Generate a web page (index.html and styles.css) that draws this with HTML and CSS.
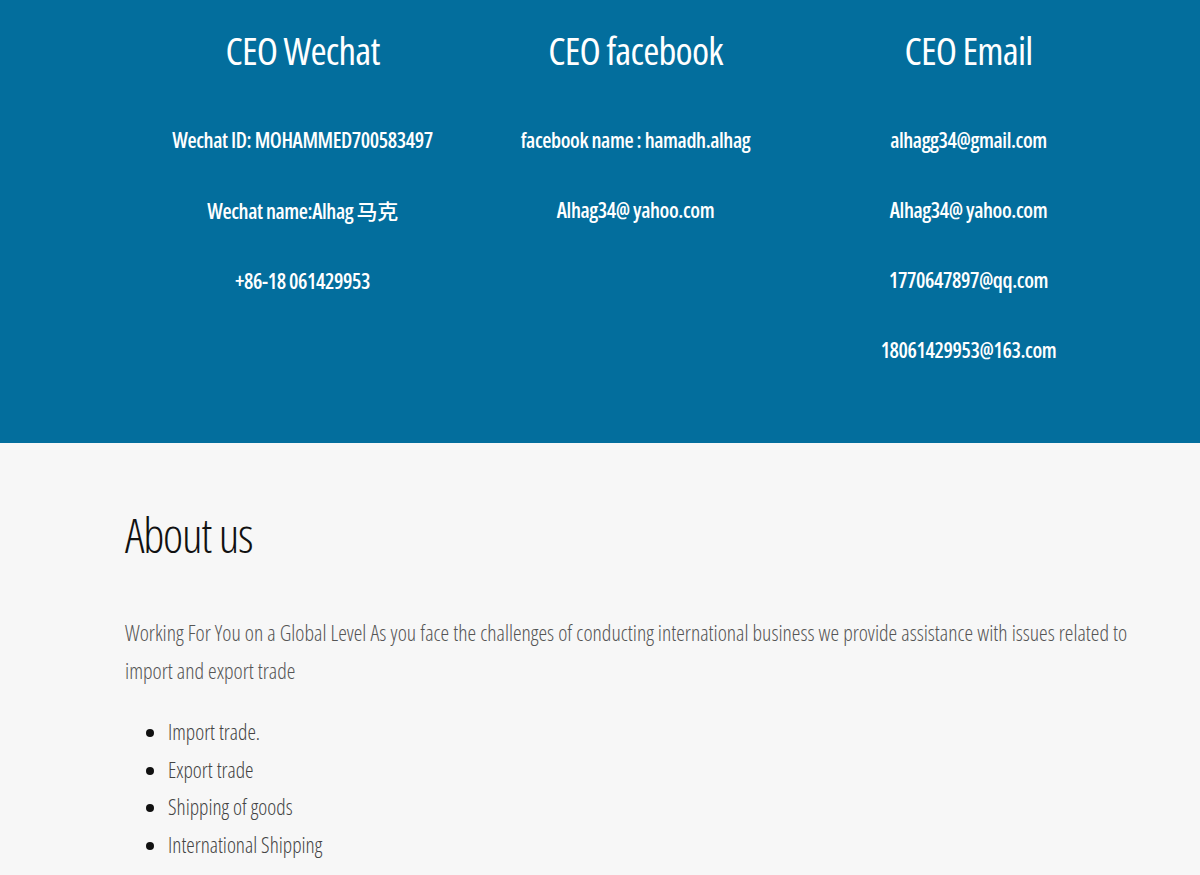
FILE: index.html
```html
<!DOCTYPE html>
<html lang="en">
<head>
<meta charset="utf-8">
<title>Contact</title>
<link rel="stylesheet" href="styles.css">
</head>
<body>
<section class="contacts">
  <div class="contacts-grid">
    <div class="contact-col">
      <h2 class="contact-title">CEO Wechat</h2>
      <p class="contact-line">Wechat ID: MOHAMMED700583497</p>
      <p class="contact-line">Wechat name:Alhag <span class="cjk">马克</span></p>
      <p class="contact-line">+86-18 061429953</p>
    </div>
    <div class="contact-col">
      <h2 class="contact-title">CEO facebook</h2>
      <p class="contact-line">facebook name : hamadh.alhag</p>
      <p class="contact-line">Alhag34@ yahoo.com</p>
    </div>
    <div class="contact-col">
      <h2 class="contact-title">CEO Email</h2>
      <p class="contact-line">alhagg34@gmail.com</p>
      <p class="contact-line">Alhag34@ yahoo.com</p>
      <p class="contact-line">1770647897@qq.com</p>
      <p class="contact-line">18061429953@163.com</p>
    </div>
  </div>
</section>
<section class="about">
  <div class="about-inner">
    <h2 class="about-title">About us</h2>
    <p class="about-text">Working For You on a Global Level As you face the challenges of conducting international business we provide assistance with issues related to import and export trade</p>
    <ul class="about-list">
      <li>Import trade.</li>
      <li>Export trade</li>
      <li>Shipping of goods</li>
      <li>International Shipping</li>
    </ul>
  </div>
</section>
</body>
</html>
```
FILE: styles.css
```css
html, body {
  margin: 0;
  padding: 0;
}
body {
  font-family: "Open Sans", "Noto Sans CJK SC", sans-serif;
  font-stretch: 75%;
  background: #f7f7f7;
}
.cjk {
  font-family: "Noto Sans CJK SC", sans-serif;
  font-weight: 500;
}
.contacts {
  background: #036e9d;
  color: #ffffff;
  height: 443px;
  box-sizing: border-box;
  padding-top: 26px;
  padding-left: 136px;
}
.contacts-grid {
  width: 999px;
  display: grid;
  grid-template-columns: repeat(3, 1fr);
}
.contact-col {
  text-align: center;
}
.contact-title {
  margin: 0 0 31px;
  font-size: 39px;
  line-height: 48px;
  font-weight: 500;
  letter-spacing: -0.8px;
}
.contact-line {
  margin: 0;
  font-size: 21px;
  line-height: 70px;
  font-weight: 600;
  letter-spacing: -0.4px;
}
.about {
  padding: 62px 0 40px 125px;
}
.about-inner {
  width: 1012px;
}
.about-title {
  margin: 0 0 50px;
  font-size: 48px;
  line-height: 59px;
  font-weight: 300;
  letter-spacing: -1.2px;
  color: #111111;
}
.about-text {
  margin: 0 0 23px;
  font-size: 21.8px;
  line-height: 38px;
  font-weight: 300;
  color: #555555;
}
.about-list {
  margin: 0;
  padding-left: 43px;
  font-size: 21.4px;
  line-height: 37.6px;
  font-weight: 300;
  color: #444444;
}
.about-list li::marker {
  color: #111111;
}
```
